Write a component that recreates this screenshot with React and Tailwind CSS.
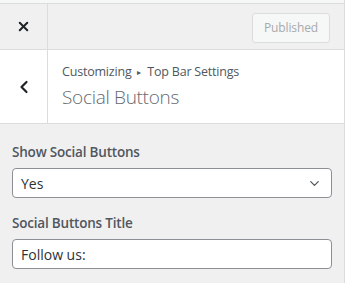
import { X, ChevronLeft, ChevronDown } from 'lucide-react';

const font = { fontFamily: '"Open Sans", "Noto Sans", sans-serif' };

export default function App() {
  return (
    <div className="w-[347px] h-[283px] bg-white overflow-hidden" style={font}>
      <div className="w-[345px] h-full border-r border-[#dcdcde] bg-[#f0f0f1] flex flex-col">
        {/* Top bar */}
        <div className="h-[3px] bg-[#f6f7f7]" />
        <div className="flex h-[47px] border-t border-b border-[#dcdcde]">
          <button className="w-[48px] flex items-center justify-center border-r border-[#dcdcde] text-[#1d2327]">
            <X className="w-[15px] h-[15px]" strokeWidth={3.2} />
          </button>
          <div className="flex-1 flex items-center justify-end pr-[14px] pt-[2px]">
            <div className="h-[30px] w-[78px] flex items-center justify-center rounded-[3px] border border-[#dcdcde] bg-[#f6f7f7] text-[12px] tracking-[-0.1px] text-[#a7aaad]">
              Published
            </div>
          </div>
        </div>

        {/* Section header */}
        <div className="flex h-[74px] bg-white border-b border-[#dcdcde]">
          <button className="w-[48px] flex items-center justify-center border-r border-[#dcdcde] text-[#1d2327]">
            <ChevronLeft className="w-[20px] h-[20px]" strokeWidth={2.6} />
          </button>
          <div className="flex-1 pl-[14px] pt-[13px]">
            <div className="text-[12.5px] leading-[18px] tracking-[-0.2px] text-[#50575e] flex items-center">
              Customizing
              <span className="text-[8px] mx-[6px]">▸</span>
              Top Bar Settings
            </div>
            <div className="text-[19px] leading-[28px] font-light tracking-[-0.3px] text-[#646970] mt-[2px]">
              Social Buttons
            </div>
          </div>
        </div>

        {/* Controls */}
        <div className="px-[12px] pt-[18px]">
          <label className="block text-[13.5px] leading-[20px] font-semibold tracking-[-0.2px] text-[#50575e] mb-[6px]">
            Show Social Buttons
          </label>
          <div className="relative h-[30px] rounded-[4px] border border-[#8c8f94] bg-white flex items-center pl-[8px] text-[14px] text-[#2c3338]">
            Yes
            <ChevronDown className="absolute right-[9px] top-[7px] w-[15px] h-[15px] text-[#50575e]" strokeWidth={2} />
          </div>
          <label className="block text-[13.5px] leading-[20px] font-semibold tracking-[-0.2px] text-[#50575e] mt-[15px] mb-[6px]">
            Social Buttons Title
          </label>
          <div className="h-[30px] rounded-[4px] border border-[#8c8f94] bg-white flex items-center pl-[8px] text-[14px] text-[#2c3338]">
            Follow us:
          </div>
        </div>
      </div>
    </div>
  );
}
